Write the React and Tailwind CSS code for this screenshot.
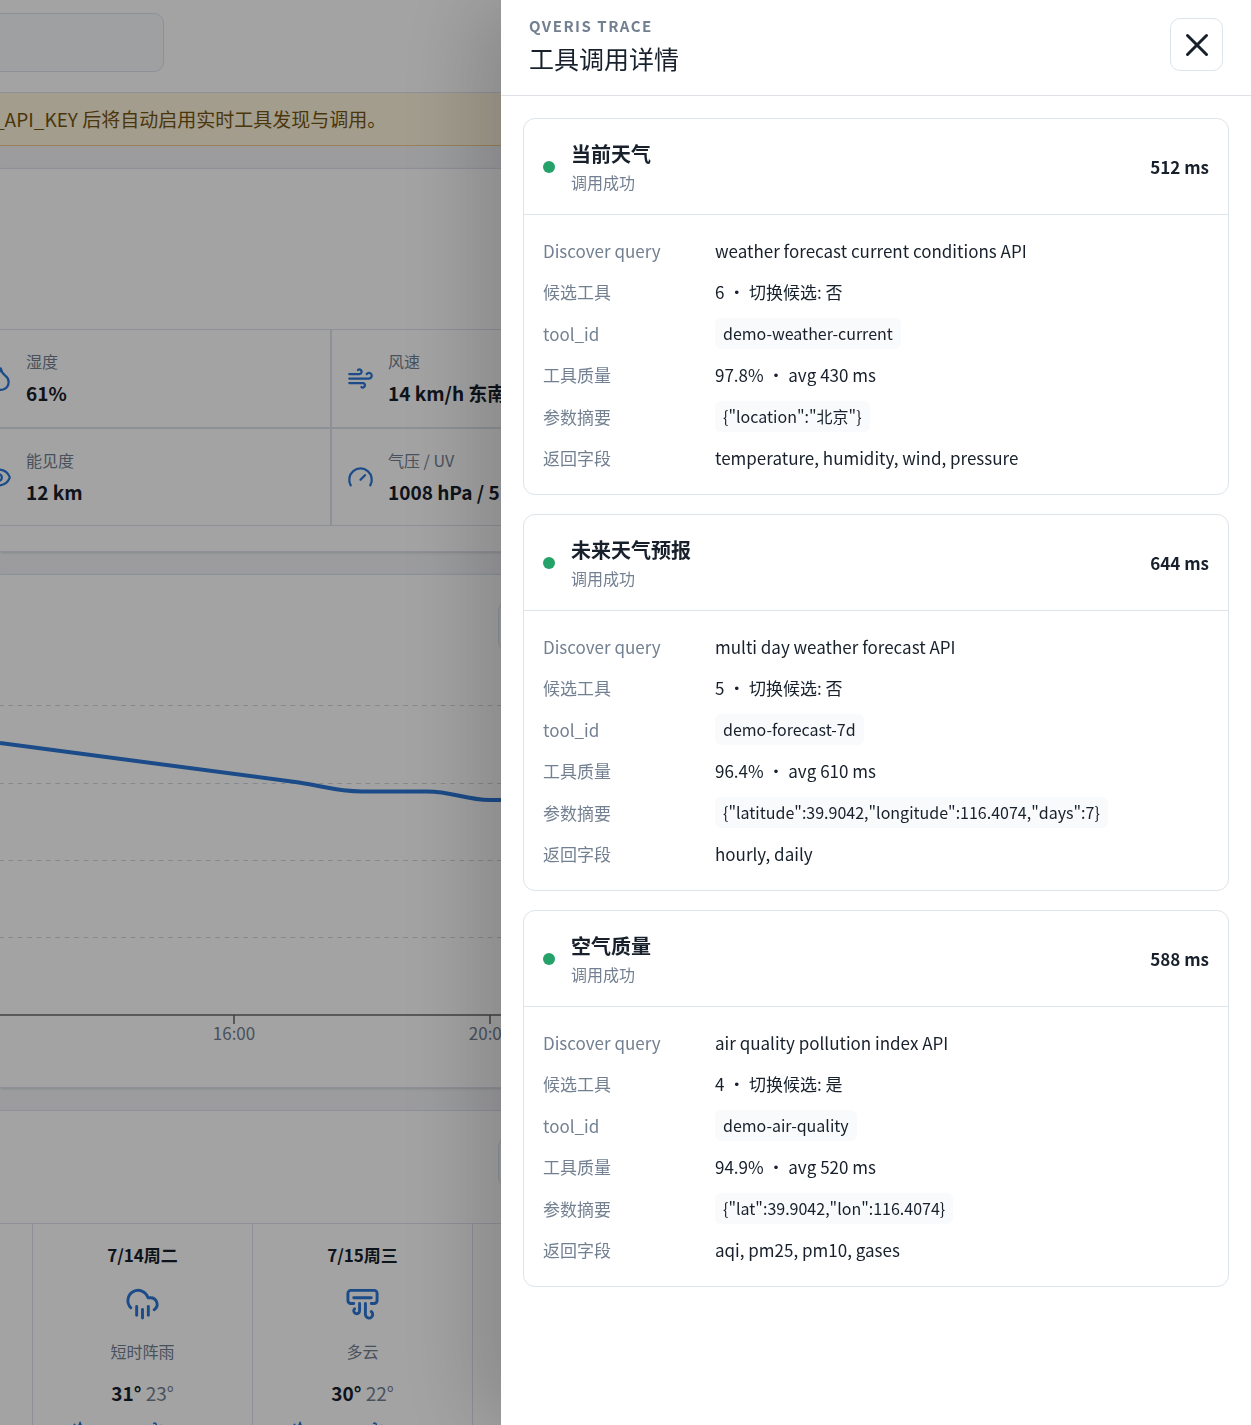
import { Wind, Gauge, Droplets, Eye, X, CloudRain, AirVent } from "lucide-react";

const traces = [
  {
    title: "当前天气",
    ms: "512 ms",
    query: "weather forecast current conditions API",
    candidates: "6 ・ 切换候选: 否",
    tool: "demo-weather-current",
    quality: "97.8% ・ avg 430 ms",
    params: '{"location":"北京"}',
    fields: "temperature, humidity, wind, pressure",
  },
  {
    title: "未来天气预报",
    ms: "644 ms",
    query: "multi day weather forecast API",
    candidates: "5 ・ 切换候选: 否",
    tool: "demo-forecast-7d",
    quality: "96.4% ・ avg 610 ms",
    params: '{"latitude":39.9042,"longitude":116.4074,"days":7}',
    fields: "hourly, daily",
  },
  {
    title: "空气质量",
    ms: "588 ms",
    query: "air quality pollution index API",
    candidates: "4 ・ 切换候选: 是",
    tool: "demo-air-quality",
    quality: "94.9% ・ avg 520 ms",
    params: '{"lat":39.9042,"lon":116.4074}',
    fields: "aqi, pm25, pm10, gases",
  },
];

const metrics = [
  { icon: Droplets, label: "湿度", value: "61%" },
  { icon: Wind, label: "风速", value: "14 km/h 东南" },
  { icon: Eye, label: "能见度", value: "12 km" },
  { icon: Gauge, label: "气压 / UV", value: "1008 hPa / 5" },
];

const days = [
  { date: "7/14周二", icon: CloudRain, text: "短时阵雨", high: "31°", low: "23°" },
  { date: "7/15周三", icon: AirVent, text: "多云", high: "30°", low: "22°" },
];

function Row({ label, code, children }) {
  return (
    <>
      <dt className="text-[#738091]">{label}</dt>
      <dd className={code ? "flex h-[33px] min-w-0 items-center" : "flex h-8 min-w-0 items-center"}>
        {code ? (
          <code className="rounded-md bg-[#f8fafc] px-2 py-1 font-[inherit] text-base leading-[23px]">{children}</code>
        ) : (
          children
        )}
      </dd>
    </>
  );
}

function TraceCard({ trace }) {
  return (
    <article className="rounded-xl border border-[#dde4ea]">
      <header className="flex h-24 items-center gap-4 border-b border-[#dde4ea] px-[19px]">
        <span className="size-3 shrink-0 rounded-full bg-[#25a26a]" />
        <div className="flex-1 pt-0.5">
          <h3 className="text-xl leading-7 font-bold">{trace.title}</h3>
          <p className="text-base leading-7 text-[#738091]">调用成功</p>
        </div>
        <strong className="text-[17px] font-bold">{trace.ms}</strong>
      </header>
      <dl className="grid grid-cols-[153px_1fr] items-center gap-x-[19px] gap-y-[9px] px-[19px] py-5 text-[17px]">
        <Row label="Discover query">{trace.query}</Row>
        <Row label="候选工具">{trace.candidates}</Row>
        <Row label="tool_id" code>{trace.tool}</Row>
        <Row label="工具质量">{trace.quality}</Row>
        <Row label="参数摘要" code>{trace.params}</Row>
        <Row label="返回字段">{trace.fields}</Row>
      </dl>
    </article>
  );
}

function Chart() {
  return (
    <svg className="block h-[376px] w-[760px]" viewBox="0 0 760 376" fill="none" aria-hidden="true">
      {[25, 103, 180, 257].map((y) => (
        <path key={y} d={`M-1 ${y}.5H760`} stroke="#cfd6dd" strokeDasharray="4.7 4.7" />
      ))}
      <path
        d="M0 63L299 102.500C322 106 338 111.500 362 111.500H427C453 111.500 465 120 490 120H560"
        stroke="#2b76d5"
        strokeWidth="4"
      />
      <path d="M0 335H760M234 335V344M490 335V344" stroke="#666" strokeWidth="1.500" />
      <g className="fill-[#738091] text-[17px]" textAnchor="middle">
        <text x="234" y="360">16:00</text>
        <text x="490" y="360">20:00</text>
      </g>
    </svg>
  );
}

function SectionAction({ label }) {
  return (
    <button
      type="button"
      aria-label={label}
      className="h-[50px] w-28 rounded-[10px] border border-[#dde3ec] bg-[#f8fafc]"
    />
  );
}

export default function App() {
  return (
    <div
      className="relative h-screen overflow-hidden bg-[#f4f5f8] font-['Noto_Sans_CJK_SC',sans-serif] text-[#17202b]"
      lang="zh-CN"
    >
      <main>
        <header className="h-[92px] bg-white pt-[13px]">
          <input
            aria-label="搜索城市"
            className="-ml-4 block h-[59px] w-[180px] rounded-[10px] border border-[#dde3ec] bg-[#f8fafc]"
          />
        </header>
        <p className="flex h-[54px] items-center border-y border-t-[#dde3ec] border-b-[#f3c98a] bg-[#fff6df] text-[19px] whitespace-nowrap text-[#765510]">
          <span className="-ml-1.5">_API_KEY 后将自动启用实时工具发现与调用。</span>
        </p>
        <section className="mt-[22px] overflow-hidden border-y border-[#dde3ec] bg-white pt-40 pb-[25px] shadow-sm">
          <div className="-ml-[31px] grid w-[724px] grid-cols-2 grid-rows-[99px_98px]">
            {metrics.map(({ icon: Icon, label, value }) => (
              <div key={label} className="flex items-center gap-[14px] border border-[#dde3ec] px-[15px]">
                <Icon className="size-[27px] shrink-0 text-[#2b76d5]" />
                <div className="pt-px whitespace-nowrap">
                  <p className="text-base leading-7 text-[#738091]">{label}</p>
                  <p className="text-[19px] leading-9 font-bold">{value}</p>
                </div>
              </div>
            ))}
          </div>
        </section>
        <section className="mt-[22px] overflow-hidden border-y border-[#dde3ec] bg-white pb-[31px] shadow-sm">
          <div className="h-[105px] pt-[26px] pl-[498px]">
            <SectionAction label="切换指标" />
          </div>
          <Chart />
        </section>
        <section className="mt-[22px] overflow-hidden border-t border-[#dde3ec] bg-white">
          <div className="h-[112px] pt-[26px] pl-[498px]">
            <SectionAction label="切换天数" />
          </div>
          <div className="-ml-[187px] grid w-[880px] grid-cols-4 border-t border-[#dde3ec] text-center">
            <div className="border-r border-[#dde3ec]" />
            {days.map(({ date, icon: Icon, text, high, low }) => (
              <div key={date} className="border-r border-[#dde3ec] pt-[17px]">
                <p className="text-[17px] leading-7 font-bold">{date}</p>
                <Icon className="mx-auto mt-[17px] size-[35px] text-[#2b76d5]" />
                <p className="mt-4 text-base leading-7 text-[#738091]">{text}</p>
                <p className="mt-[13px] text-[19px] leading-[30px]">
                  <b>{high}</b> <span className="text-[#738091]">{low}</span>
                </p>
                <div className="mt-3 grid grid-cols-2 gap-x-1.5 px-9 text-[#2b76d5]">
                  <Droplets className="size-[19px]" />
                  <Wind className="size-[19px]" />
                </div>
              </div>
            ))}
          </div>
        </section>
      </main>
      <div className="fixed inset-0 bg-black/36" />
      <aside
        role="dialog"
        aria-labelledby="trace-title"
        className="fixed inset-y-0 right-0 w-[750px] max-w-full overflow-y-auto bg-white shadow-[-24px_0_80px_rgba(0,0,0,0.18)]"
      >
        <header className="flex h-24 items-start justify-between border-b border-[#dfe3e8] px-7 pt-3">
          <div>
            <p className="text-[15px] leading-7 font-bold tracking-[1.500px] text-[#738091]">QVERIS TRACE</p>
            <h2 id="trace-title" className="text-[25px] leading-9">工具调用详情</h2>
          </div>
          <button
            type="button"
            aria-label="关闭"
            className="mt-1.5 flex size-[53px] items-center justify-center rounded-[10px] border border-[#dde4ea]"
          >
            <X className="size-[38px]" strokeWidth={1.9} />
          </button>
        </header>
        <div className="flex flex-col gap-[19px] p-[22px]">
          {traces.map((trace) => (
            <TraceCard key={trace.title} trace={trace} />
          ))}
        </div>
      </aside>
    </div>
  );
}
